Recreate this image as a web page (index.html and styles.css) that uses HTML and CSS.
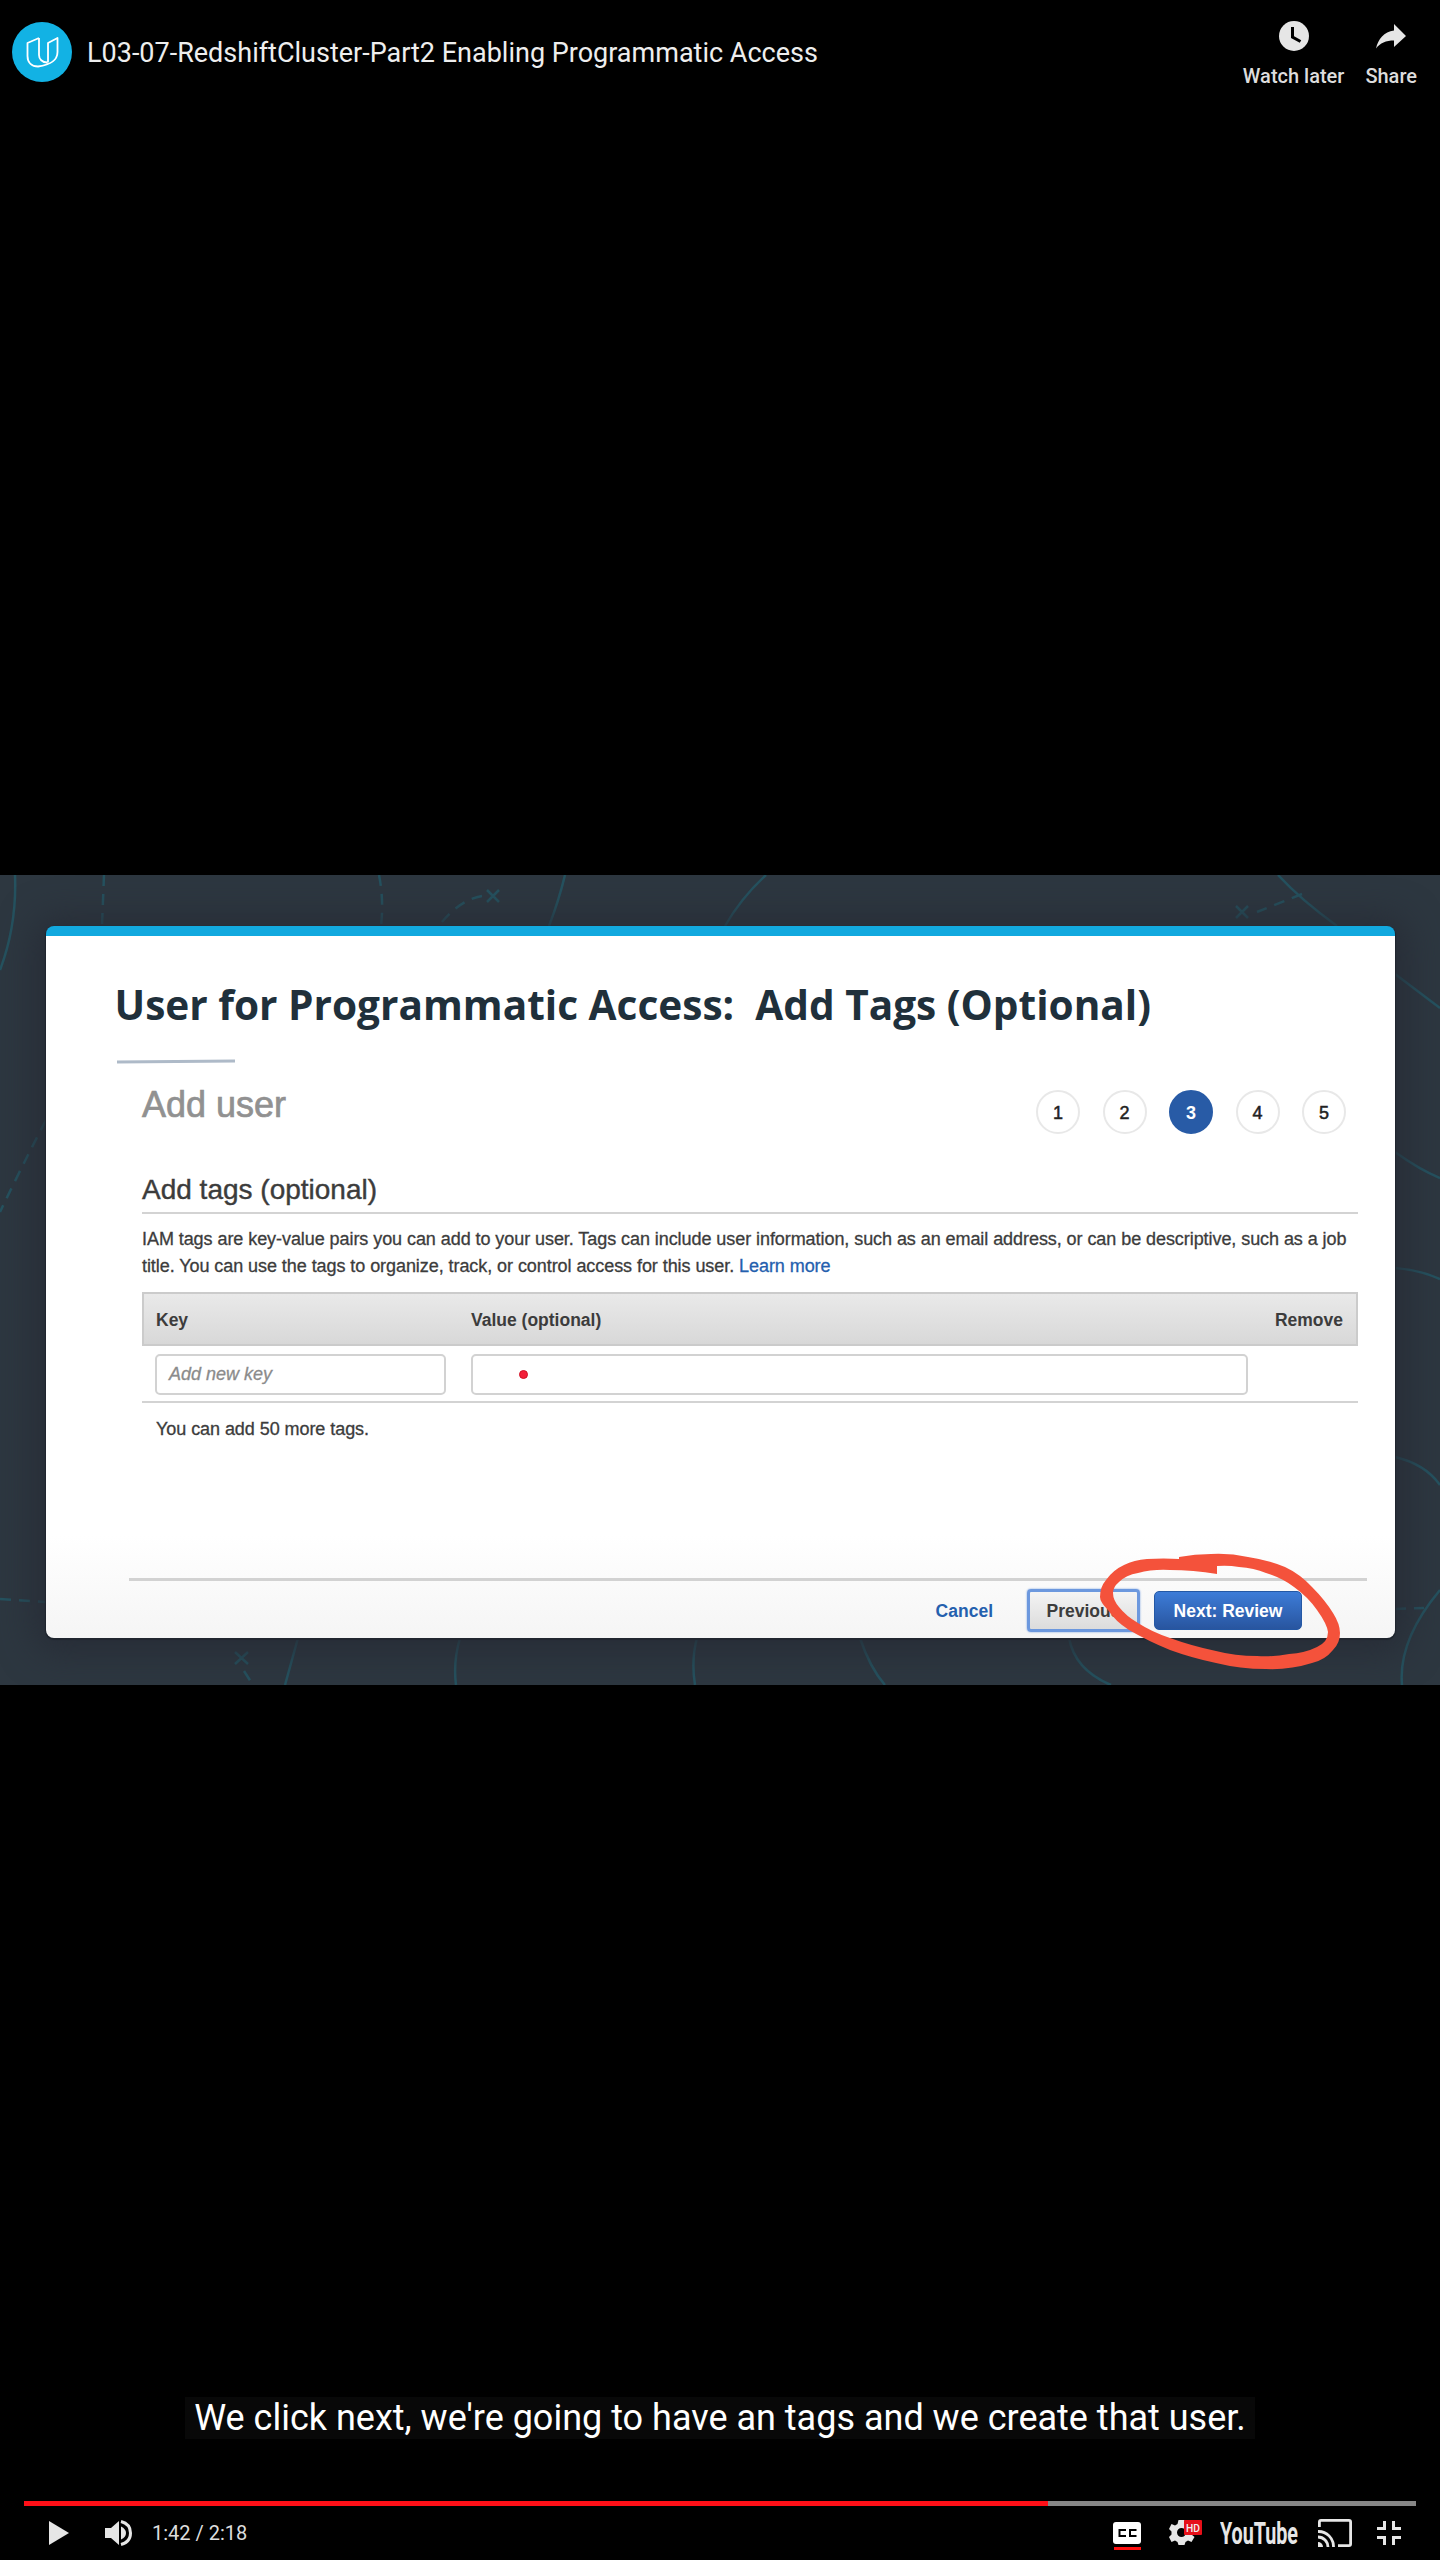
FILE: index.html
```html
<!DOCTYPE html>
<html lang="en">
<head>
<meta charset="utf-8">
<title>L03-07-RedshiftCluster-Part2 Enabling Programmatic Access</title>
<link rel="stylesheet" href="styles.css">
</head>
<body>
<header class="topbar">
  <svg class="avatar" viewBox="0 0 60 60"><circle cx="30" cy="30" r="30" fill="#12b2e4"/><path d="M27 16 15.500 21V34C15.500 41 20 44.500 26 44.500C36 43 45.500 40 45.500 30V16L36 21V40.500M27 16V33C27 37 30 40.500 35.500 40.500" fill="none" stroke="#fff" stroke-width="1.800" stroke-linejoin="round"/></svg>
  <h1 class="video-title">L03-07-RedshiftCluster-Part2 Enabling Programmatic Access</h1>
  <div class="action watch"><svg width="30" height="30" viewBox="0 0 30 30"><circle cx="15" cy="15" r="15" fill="#e6e6e6"/><path d="M13.500 6V16L21.500 20.500" fill="none" stroke="#000" stroke-width="3"/></svg><span>Watch later</span></div>
  <div class="action share"><svg width="30" height="30" viewBox="0 0 30 30"><path d="M18 3 30 15 18 26V19.500C10 19.500 4 22 0 27.500C2 18 8 11 18 9.500Z" fill="#e6e6e6"/></svg><span>Share</span></div>
</header>

<main class="slide">
  <svg class="map" viewBox="0 875 1440 810" fill="none" stroke="#25525f" stroke-width="2.500">
    <path d="M15 875Q17 925 0 970M565 875Q559 900 549 926M766 875Q741 898 725 926M1278 875Q1301 900 1337 926M1395 974 1440 1008M1395 1152Q1420 1170 1440 1178M1395 1268Q1420 1270 1440 1279M1395 1457Q1425 1464 1440 1485M298 1638 285 1685M460 1638Q453 1662 456 1685M697 1638Q691 1660 695 1685M860 1638Q870 1668 885 1685M1069 1638Q1075 1670 1111 1685M1440 1590Q1398 1640 1402 1685"/>
    <path stroke-dasharray="11 8" d="M104 875 102 926M379 875Q384 900 381 926M442 922Q460 900 482 896M1302 894 1257 912M46 1120Q20 1170 0 1212M0 1599 46 1602M1395 1609 1424 1608M244 1671 253 1685"/>
    <path d="M487 890 499 902M499 890 487 902M1236 906 1248 918M1248 906 1236 918M235 1652 248 1664M248 1652 235 1664"/>
  </svg>
  <section class="card">
    <h2 class="slide-title">User for Programmatic Access:&nbsp; Add Tags (Optional)</h2>
    <div class="title-rule"></div>
    <div class="wizard-head">
      <div class="wizard-title">Add user</div>
      <ol class="steps"><li>1</li><li>2</li><li class="current">3</li><li>4</li><li>5</li></ol>
    </div>
    <div class="tags">
      <h3 class="tags-title">Add tags (optional)</h3>
      <p class="intro"><span class="line">IAM tags are key-value pairs you can add to your user. Tags can include user information, such as an email address, or can be descriptive, such as a job</span><span class="line">title. You can use the tags to organize, track, or control access for this user. <a>Learn more</a></span></p>
      <div class="table-head"><span class="col-key">Key</span><span class="col-value">Value (optional)</span><span class="col-remove">Remove</span></div>
      <div class="table-row"><div class="field key">Add new key</div><div class="field value"><i class="pointer"></i></div></div>
      <p class="remaining">You can add 50 more tags.</p>
    </div>
    <div class="buttons"><a class="cancel">Cancel</a><span class="btn previous">Previous</span><span class="btn next">Next: Review</span></div>
  </section>
  <svg class="marker" viewBox="0 875 1440 810"><path fill="#f4523b" fill-rule="evenodd" d="M1179 1557Q1195 1554 1211 1554Q1230 1553 1248 1557Q1268 1560 1285 1567Q1300 1574 1312 1587Q1325 1600 1333 1613Q1340 1624 1340 1633Q1340 1643 1333 1650Q1325 1660 1312 1663Q1290 1670 1266 1669Q1240 1669 1216 1663Q1192 1658 1170 1650Q1148 1641 1129 1630Q1115 1621 1108 1610Q1100 1602 1100 1597Q1100 1587 1106 1580Q1113 1570 1124 1565Q1134 1560 1147 1559Q1164 1558 1179 1559ZM1217 1574V1566Q1228 1565 1239 1567Q1254 1568 1266 1573Q1282 1578 1294 1587Q1308 1597 1317 1610Q1327 1624 1328 1632Q1328 1642 1317 1647Q1305 1653 1289 1654Q1273 1657 1257 1656Q1235 1656 1216 1651Q1192 1646 1170 1638Q1152 1632 1138 1623Q1126 1616 1119 1607Q1113 1600 1113 1593Q1113 1587 1119 1582Q1126 1575 1138 1573Q1153 1569 1170 1570Q1193 1570 1217 1574Z"/></svg>
</main>

<div class="caption"><span>We click next, we're going to have an tags and we create that user.</span></div>

<footer class="player">
  <div class="progress"><div class="played"></div></div>
  <div class="controls">
    <svg class="play" width="20" height="24" viewBox="0 0 20 24"><path d="M0 0 20 12 0 24Z" fill="#e6e6e6"/></svg>
    <svg class="volume" width="27" height="26" viewBox="0 0 27 26"><path d="M0 8H6L14 1V25L6 18H0ZM16 6.500Q21 9 21 13T16 19.500Z" fill="#e6e6e6"/><path d="M16 1.500Q25.500 4 25.500 13T16 24.500" fill="none" stroke="#e6e6e6" stroke-width="3"/></svg>
    <span class="time">1:42 / 2:18</span>
    <svg class="cc" width="28" height="28" viewBox="0 0 28 28"><rect width="28" height="22" rx="3" fill="#fff"/><path d="M12 9V8H6.500V14H12V13M22.500 9V8H17V14H22.500V13" fill="none" stroke="#000" stroke-width="2"/><path d="M1 25H28V28H1Z" fill="#f11"/></svg>
    <svg class="gear" width="34" height="26" viewBox="0 0 34 26"><path fill="#e6e6e6" fill-rule="evenodd" d="M9.500 0H15.500L16.500 4 19 5.500 22.500 4 25.500 9 22.500 11.500V14.500L25.500 17 22.500 22 19 20.500 16.500 22 15.500 25H9.500L8.500 22 6 20.500 2.500 22 0 17 2.500 14.500V11.500L0 9 2.500 4 6 5.500 8.500 4ZM12.500 8A4.500 4.500 0 1 0 12.500 17A4.500 4.500 0 1 0 12.500 8"/><rect x="15" y="0" width="18" height="15" rx="1" fill="#e60f18"/><text x="17" y="11.500" font-size="11" font-weight="500" textLength="14" lengthAdjust="spacingAndGlyphs" fill="#eee">HD</text></svg>
    <svg class="youtube" width="80" height="40" viewBox="0 -7 80 40"><text x="0" y="24" font-size="32" font-weight="700" textLength="78" lengthAdjust="spacingAndGlyphs" fill="#e6e6e6">YouTube</text></svg>
    <svg class="cast" width="34" height="28" viewBox="0 0 34 28" fill="none" stroke="#e6e6e6" stroke-width="2.800"><path d="M1.400 8V3Q1.400 1.400 3 1.400H31Q32.600 1.400 32.600 3V25Q32.600 26.600 31 26.600H20M0 12.500A15 15 0 0 1 15.500 28M0 18A10 10 0 0 1 10 28"/><path d="M0 23A5 5 0 0 1 5 28H0Z" fill="#e6e6e6" stroke="none"/></svg>
    <svg class="shrink" width="24" height="24" viewBox="0 0 24 24" fill="none" stroke="#e6e6e6" stroke-width="3"><path d="M0 7.500H7.500V0M16.500 0V7.500H24M24 16.500H16.500V24M7.500 24V16.500H0"/></svg>
  </div>
</footer>
</body>
</html>
```
FILE: styles.css
```css
* { box-sizing: border-box; }
body { margin: 0; width: 1440px; height: 2560px; background: #000; color: #eee; font-family: Roboto, sans-serif; display: flex; flex-direction: column; overflow: hidden; }
h1, h2, h3, p, ol { margin: 0; padding: 0; font-weight: normal; }
svg { display: block; flex: none; }

.topbar { height: 875px; padding: 21px 23px 0 12px; display: flex; align-items: flex-start; }
.avatar { width: 60px; height: 60px; margin-top: 1px; }
.video-title { flex: 1; margin-left: 15px; font-size: 27px; line-height: 64px; white-space: nowrap; }
.action { display: flex; flex-direction: column; align-items: center; font-size: 20px; font-weight: 500; line-height: 24px; gap: 13px; color: #ddd; white-space: nowrap; }
.share { margin-left: 21px; }

.slide { position: relative; height: 810px; padding: 51px 45px 47px 46px; background: #2d3740; overflow: hidden; font-family: "Liberation Sans", sans-serif; }
.map, .marker { position: absolute; left: 0; top: 0; width: 1440px; height: 810px; }
.card { position: relative; height: 712px; border-top: 10px solid #12a9df; border-radius: 8px; background: linear-gradient(#fff 0, #fff 600px, #f5f5f5 702px); box-shadow: 0 3px 36px 10px #272c36, 0 1px 1px 1px #111820; color: #3c3c3c; }
.slide-title { padding: 38px 0 0 68.500px; font: 700 40.600px/61px "Open Sans", sans-serif; height: 99px; white-space: nowrap; color: #20303b; }
.title-rule { width: 118px; height: 3px; margin: 25px 0 0 71px; background: #aebac8; transform: rotate(-.5deg); }
.wizard-head { height: 98px; margin: 0 49px 0 96px; display: flex; justify-content: space-between; align-items: center; }
.wizard-title { font-size: 36px; padding-bottom: 15px; color: #919191; -webkit-text-stroke: .7px #919191; }
.steps { display: flex; gap: 22.500px; list-style: none; }
.steps li { width: 44px; height: 44px; border: 2px solid #e8e8e8; border-radius: 50%; text-align: center; font-size: 18px; line-height: 42px; color: #222; -webkit-text-stroke: .5px #222; }
.steps .current { background: #285ba6; border-color: #285ba6; color: #fff; font-weight: 700; -webkit-text-stroke: 0; }
.tags { margin: 0 37px 0 96px; }
.tags-title { height: 53px; padding-top: 7px; line-height: 44px; border-bottom: 2px solid #d3d3d3; font-size: 28px; -webkit-text-stroke: .4px #3c3c3c; }
.intro { margin-top: 11px; font-size: 18px; line-height: 27px; letter-spacing: -.065px; padding-top: 1px; height: 54px; -webkit-text-stroke: .3px; }
.line { display: block; width: max-content; white-space: nowrap; }
a { color: #2460ae; }
.table-head { margin-top: 13px; height: 54px; padding: 2px 13px 0 12px; display: flex; align-items: center; border: 2px solid #cbcbcb; background: linear-gradient(#e9e9e9, #d8d8d8); font-size: 17.500px; font-weight: 700; }
.col-key { width: 315px; }
.col-value { flex: 1; }
.table-row { height: 57px; padding: 8px 0 0 13px; display: flex; gap: 25px; border-bottom: 2px solid #d3d3d3; }
.field { height: 41px; border: 2px solid #d2d2d2; border-radius: 5px; background: #fff; }
.key { width: 291px; padding-left: 12px; font-size: 18px; line-height: 37px; font-style: italic; color: #8b8b8b; -webkit-text-stroke: .3px; }
.value { width: 777px; padding: 14px 0 0 46px; }
.pointer { display: block; width: 9px; height: 9px; border-radius: 50%; background: #f3203a; border: 1px solid #d01025; }
.remaining { margin-top: 6px; padding-left: 14px; line-height: 40px; font-size: 18px; letter-spacing: -.06px; -webkit-text-stroke: .3px; }
.buttons { margin: 129px 28px 0 83px; height: 60px; padding: 1px 65px 0 0; border-top: 3px solid #d2d2d2; display: flex; justify-content: flex-end; align-items: center; font-size: 17.500px; font-weight: 700; }
.cancel { margin-right: 34px; padding-top: 2px; }
.btn { display: block; text-align: center; white-space: nowrap; }
.previous { width: 113px; height: 43px; line-height: 38px; border: 3px solid #6c98de; border-radius: 4px; background: linear-gradient(#f4f4f4, #dcdcdc); box-shadow: 0 0 2px #6c98de; }
.next { width: 148px; height: 39px; margin-left: 14px; line-height: 39px; border-radius: 5px; border: 1px solid #2458a5; background: linear-gradient(#3d7cd8, #28559f); color: #fff; }

.caption { height: 816px; padding-top: 712px; display: flex; justify-content: center; align-items: flex-start; }
.caption span { height: 42px; padding: 0 9px; background: #080808; color: #fff; font-size: 36px; line-height: 42px; white-space: nowrap; }
.player { padding: 0 24px; }
.progress { height: 5px; background: #868686; }
.played { width: 1024px; height: 5px; background: #ff0f17; }
.controls { display: flex; align-items: center; height: 54px; padding: 0 15px 0 25px; }
.volume { margin-left: 36px; }
.time { width: 100px; margin: -1px 0 0 20px; font-size: 20px; line-height: 24px; color: #ddd; white-space: nowrap; }
.cc { margin: 6px 0 0 auto; }
.gear { margin-left: 28px; }
.youtube { margin-left: 17px; }
.cast { margin-left: 18px; }
.shrink { margin-left: 25px; }
```
